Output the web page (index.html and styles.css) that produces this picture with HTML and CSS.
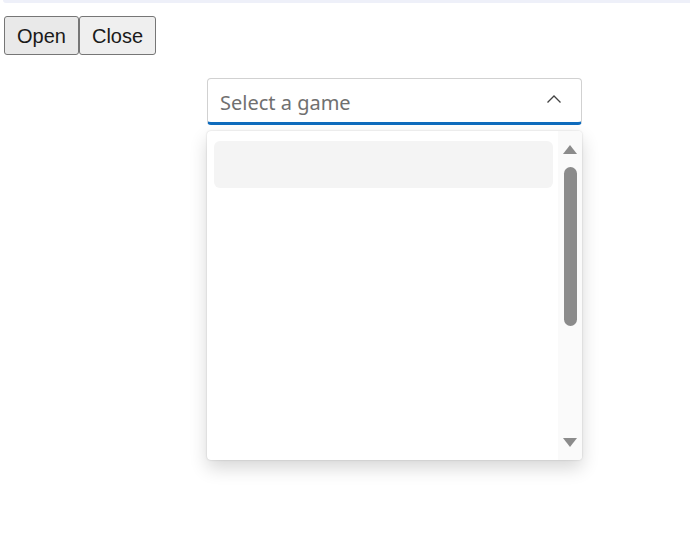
FILE: index.html
```html
<!DOCTYPE html>
<html lang="en">
<head>
    <meta charset="UTF-8">
    <meta name="viewport" content="width=device-width, initial-scale=1.0">
    <title>Combobox</title>
    <link rel="stylesheet" href="styles.css">
</head>
<body>
    <div class="top-strip"></div>

    <div class="page">
        <div class="actions">
            <button type="button" class="btn btn-open">Open</button><button type="button" class="btn">Close</button>
        </div>

        <div class="combo-wrap">
            <div class="combobox">
                <span class="placeholder">Select a game</span>
                <svg class="chevron" width="16" height="10" viewBox="0 0 16 10">
                    <path d="M1.5 8.5 L8 2 L14.5 8.5" fill="none" stroke="#424242" stroke-width="1.3"/>
                </svg>
            </div>

            <div class="listbox">
                <div class="options">
                    <div class="option"></div>
                </div>
                <div class="scrollbar">
                    <span class="arrow arrow-up"></span>
                    <span class="thumb"></span>
                    <span class="track-fill"></span>
                    <span class="arrow arrow-down"></span>
                </div>
            </div>
        </div>
    </div>
</body>
</html>
```

FILE: styles.css
```css
* {
    margin: 0;
    padding: 0;
    box-sizing: border-box;
}

html, body {
    min-height: 100%;
}

body {
    background-color: #fff;
    font-family: 'Liberation Sans', Arial, sans-serif;
    color: #242424;
}

.top-strip {
    height: 3px;
    margin-left: 3px;
    background-color: #eef0f9;
    border-bottom-left-radius: 3px;
}

.page {
    padding: 13px 4px 60px 4px;
}

.actions {
    display: flex;
}

.btn {
    font-family: 'Liberation Sans', Arial, sans-serif;
    font-size: 20px;
    line-height: 23px;
    padding: 8px 12px 6px;
    color: #1a1a1a;
    background-color: #efefef;
    border: 1px solid #767676;
    border-radius: 3px;
}

.btn-open {
    background-color: #e9e9e9;
}

.combo-wrap {
    width: 375px;
    margin: 23px 0 0 203px;
}

.combobox {
    height: 47px;
    display: flex;
    align-items: center;
    justify-content: space-between;
    padding: 0 19px 0 12px;
    border: 1px solid #d1d1d1;
    border-bottom: 3px solid #0f6cbd;
    border-radius: 4px;
    background-color: #fff;
}

.placeholder {
    font-family: 'Noto Sans', 'Open Sans', sans-serif;
    font-size: 20px;
    color: #707070;
    padding-top: 3px;
}

.chevron {
    display: block;
    margin-top: -3px;
}

.listbox {
    margin-top: 6px;
    height: 329px;
    display: flex;
    background-color: #fff;
    border-radius: 4px;
    box-shadow: 0 0 2px rgba(0, 0, 0, 0.2), 0 8px 18px rgba(0, 0, 0, 0.16);
}

.options {
    flex: 1;
    padding: 10px 5px 0 7px;
}

.option {
    height: 47px;
    background-color: #f4f4f4;
    border-radius: 6px;
}

.scrollbar {
    width: 24px;
    display: flex;
    flex-direction: column;
    align-items: center;
    background-color: #fafafa;
    border-radius: 0 4px 4px 0;
    padding: 14px 0 13px;
}

.arrow {
    width: 0;
    height: 0;
    border-left: 7px solid transparent;
    border-right: 7px solid transparent;
}

.arrow-up {
    border-bottom: 9px solid #8b8b8b;
}

.arrow-down {
    border-top: 9px solid #8b8b8b;
}

.thumb {
    width: 13px;
    height: 159px;
    margin-top: 13px;
    background-color: #8b8b8b;
    border-radius: 7px;
}

.track-fill {
    flex: 1;
}
```
